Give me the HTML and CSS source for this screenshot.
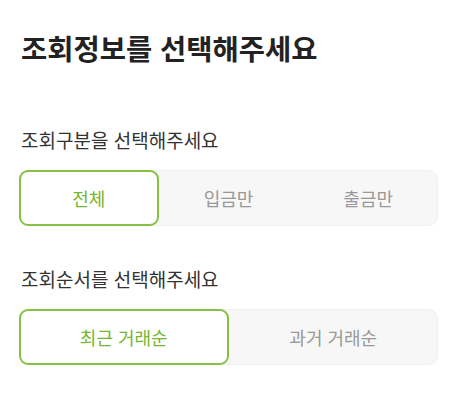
FILE: index.html
```html
<!DOCTYPE html>
<html lang="ko">
<head>
    <meta charset="UTF-8">
    <meta name="viewport" content="width=device-width, initial-scale=1.0">
    <title>조회정보 선택</title>
    <link rel="stylesheet" href="styles.css">
</head>
<body>

    <div class="page">
        <h1 class="title">조회정보를 선택해주세요</h1>

        <section class="option-group">
            <p class="option-label">조회구분을 선택해주세요</p>
            <div class="segment">
                <button class="segment-item active">전체</button>
                <button class="segment-item">입금만</button>
                <button class="segment-item">출금만</button>
            </div>
        </section>

        <section class="option-group">
            <p class="option-label">조회순서를 선택해주세요</p>
            <div class="segment">
                <button class="segment-item active">최근 거래순</button>
                <button class="segment-item">과거 거래순</button>
            </div>
        </section>
    </div>

    <script>
        document.querySelectorAll(".segment").forEach(segment => {
            segment.addEventListener("click", e => {
                const item = e.target.closest(".segment-item");
                if (!item) return;
                segment.querySelectorAll(".segment-item").forEach(b => b.classList.remove("active"));
                item.classList.add("active");
            });
        });
    </script>

</body>
</html>
```

FILE: styles.css
```css
body {
    margin: 0;
    font-family: "Noto Sans CJK KR", "Noto Sans", sans-serif;
    background-color: #fff;
    color: #222;
}

.page {
    padding: 29px 23px 0 19px;
}

.title {
    margin: 0 0 0 2px;
    font-size: 28.5px;
    line-height: 38px;
    font-weight: 700;
    color: #222;
}

.option-group {
    margin-top: 60px;
}

.option-group + .option-group {
    margin-top: 40px;
}

.option-label {
    margin: 0 0 17px 2px;
    font-size: 19px;
    line-height: 26px;
    color: #333;
}

.segment {
    display: flex;
    height: 56px;
    background-color: #f7f7f7;
    border: 1px solid #efefef;
    border-radius: 10px;
    box-sizing: border-box;
}

.segment-item {
    flex: 1;
    margin: -1px 0;
    padding: 0;
    border: 2px solid transparent;
    border-radius: 9px;
    background: none;
    font-family: inherit;
    font-size: 18px;
    color: #999;
    cursor: pointer;
}

.segment-item:first-child {
    margin-left: -1px;
}

.segment-item:last-child {
    margin-right: -1px;
}

.segment-item.active {
    background-color: #fff;
    border-color: #86c144;
    color: #76b630;
}
```
